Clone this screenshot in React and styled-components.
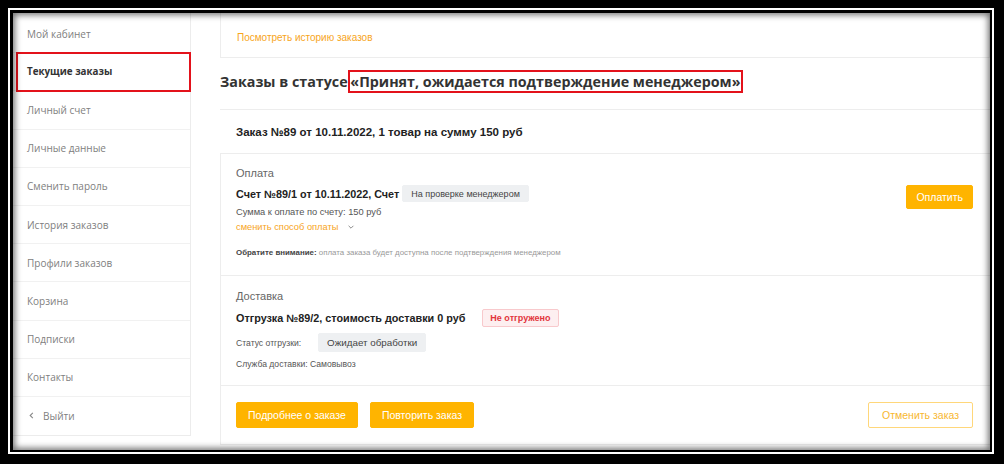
import React from "react";
import styled, { createGlobalStyle } from "styled-components";

const GlobalStyle = createGlobalStyle`
  html, body {
    margin: 0;
    padding: 0;
    background: #000;
  }
  * {
    box-sizing: border-box;
  }
`;

const Frame = styled.div`
  width: 1004px;
  height: 464px;
  background: #000;
  padding: 8px 10px 10px 8px;
`;

const FrameLine = styled.div`
  height: 100%;
  border: 2px solid #fff;
`;

const Screen = styled.div`
  height: 100%;
  border-style: solid;
  border-color: #000;
  border-width: 3px 2px 2px 3px;
  background: #000;
`;

const Page = styled.div`
  position: relative;
  display: flex;
  height: 100%;
  overflow: hidden;
  background: #fff;
  font-family: "Liberation Sans", Arial, sans-serif;
  color: #333;

  &::after {
    content: "";
    position: absolute;
    inset: 0;
    pointer-events: none;
    box-shadow: inset 0 0 6px 2px rgba(0, 0, 0, 0.55);
  }
`;

const Sidebar = styled.nav`
  width: 178px;
  flex-shrink: 0;
  align-self: flex-start;
  padding-top: 2px;
  border-right: 1px solid #ececec;
  border-bottom: 1px solid #ececec;
`;

const MenuItem = styled.div`
  position: relative;
  display: flex;
  align-items: center;
  gap: 7px;
  height: 38.2px;
  padding-left: 14px;
  border-bottom: ${(p) => (p.$last ? "none" : "1px solid #f1f1f1")};
  font-family: "Open Sans", sans-serif;
  font-size: ${(p) => (p.$active ? "9.8px" : "10px")};
  font-weight: ${(p) => (p.$active ? 700 : 400)};
  color: ${(p) => (p.$active ? "#333" : "#808080")};

  ${(p) =>
    p.$active &&
    `
    &::after {
      content: "";
      position: absolute;
      left: 3px;
      right: -1px;
      top: -1px;
      bottom: -2px;
      border: 2px solid #e3121b;
    }
  `}
`;

const Main = styled.main`
  flex: 1;
  margin-left: 29px;
  display: flex;
  flex-direction: column;
`;

const HistoryCard = styled.div`
  height: 45px;
  border: 1px solid #ededed;
  border-top: none;
  padding: 0 16px 12px;
  display: flex;
  align-items: flex-end;
`;

const OrangeLink = styled.span`
  color: #f7a51c;
  font-size: ${(p) => p.$size || "10px"};
  line-height: 14px;
`;

const Heading = styled.h2`
  margin: 12px 0 15px;
  font-family: "Open Sans", sans-serif;
  font-size: 14.3px;
  font-weight: 700;
  line-height: 24px;
  color: #333;
  white-space: nowrap;
`;

const Marked = styled.span`
  border: 2px solid #e3121b;
  margin-left: -3px;
  padding: 0 1px 0 0;
`;

const OrderHeader = styled.div`
  height: 44px;
  border-top: 1px solid #ededed;
  padding-left: 16px;
  display: flex;
  align-items: center;
  font-size: 11.5px;
  font-weight: 700;
  color: #222;
`;

const OrderBody = styled.div`
  border: 1px solid #ededed;
  border-right: none;
`;

const Section = styled.section`
  display: flex;
  justify-content: space-between;
  align-items: flex-start;
  padding: ${(p) => p.$pad};
  border-bottom: 1px solid #ededed;
`;

const Column = styled.div`
  display: flex;
  flex-direction: column;
`;

const Label = styled.div`
  font-size: 11px;
  line-height: 14px;
  color: #666;
`;

const Row = styled.div`
  display: flex;
  align-items: center;
  gap: ${(p) => p.$gap || "3px"};
  margin-top: ${(p) => p.$mt || "0"};
`;

const Title = styled.span`
  font-size: 10.8px;
  font-weight: 700;
  color: #222;
`;

const Text = styled.div`
  font-size: ${(p) => p.$size || "8.6px"};
  line-height: ${(p) => p.$lh || "14px"};
  color: ${(p) => p.$color || "#555"};
  margin-top: ${(p) => p.$mt || "0"};
  white-space: nowrap;

  b {
    color: #444;
  }
`;

const Badge = styled.span`
  display: inline-flex;
  align-items: center;
  height: ${(p) => p.$h || "17px"};
  padding: 0 ${(p) => p.$px || "8px"};
  border-radius: 2px;
  font-size: ${(p) => p.$size || "9px"};
  background: ${(p) => (p.$danger ? "#fdeff0" : "#eef0f2")};
  border: 1px solid ${(p) => (p.$danger ? "#f8c9cc" : "#eef0f2")};
  color: ${(p) => (p.$danger ? "#e2353c" : "#444")};
  font-weight: ${(p) => (p.$danger ? 700 : 400)};
`;

const Button = styled.button`
  height: ${(p) => p.$h || "26px"};
  padding: 0 ${(p) => p.$px || "11px"};
  border-radius: 2px;
  font-family: "Liberation Sans", Arial, sans-serif;
  font-size: 10.5px;
  cursor: pointer;
  background: ${(p) => (p.$outline ? "#fff" : "#ffb400")};
  border: 1px solid ${(p) => (p.$outline ? "#ffd77a" : "#ffb400")};
  color: ${(p) => (p.$outline ? "#f7b731" : "#fff")};
  margin-top: ${(p) => p.$mt || "0"};
`;

const Footer = styled.div`
  display: flex;
  justify-content: space-between;
  padding: 16px 17px 16px 15px;
`;

const ButtonGroup = styled.div`
  display: flex;
  gap: 12px;
`;

const Chevron = ({ dir = "down", size = 8 }) => (
  <svg width={size} height={size} viewBox="0 0 10 10" fill="none" stroke="#888" strokeWidth="1.2">
    {dir === "down" ? <path d="M2 3.5 L5 6.5 L8 3.5" /> : <path d="M6.5 2 L3.5 5 L6.5 8" />}
  </svg>
);

const menu = [
  "Мой кабинет",
  "Текущие заказы",
  "Личный счет",
  "Личные данные",
  "Сменить пароль",
  "История заказов",
  "Профили заказов",
  "Корзина",
  "Подписки",
  "Контакты",
];

const App = () => {
  return (
    <>
      <GlobalStyle />
      <Frame>
        <FrameLine>
          <Screen>
            <Page>
              <Sidebar>
                {menu.map((item) => (
                  <MenuItem key={item} $active={item === "Текущие заказы"}>
                    {item}
                  </MenuItem>
                ))}
                <MenuItem $last>
                  <Chevron dir="left" size={9} />
                  Выйти
                </MenuItem>
              </Sidebar>

              <Main>
                <HistoryCard>
                  <OrangeLink>Посмотреть историю заказов</OrangeLink>
                </HistoryCard>

                <Heading>
                  Заказы в статусе <Marked>«Принят, ожидается подтверждение менеджером»</Marked>
                </Heading>

                <OrderHeader>Заказ №89 от 10.11.2022, 1 товар на сумму 150 руб</OrderHeader>

                <OrderBody>
                  <Section $pad="12px 17px 16px 15px">
                    <Column>
                      <Label>Оплата</Label>
                      <Row $mt="5px">
                        <Title>Счет №89/1 от 10.11.2022, Счет</Title>
                        <Badge>На проверке менеджером</Badge>
                      </Row>
                      <Text $size="9.3px" $mt="3px">Сумма к оплате по счету: 150 руб</Text>
                      <Row $gap="9px" $mt="1px">
                        <OrangeLink $size="9.3px">сменить способ оплаты</OrangeLink>
                        <Chevron />
                      </Row>
                      <Text $size="7.9px" $lh="12px" $mt="13px" $color="#999">
                        <b>Обратите внимание:</b> оплата заказа будет доступна после подтверждения менеджером
                      </Text>
                    </Column>
                    <Button $h="24px" $px="9px" $mt="19px">Оплатить</Button>
                  </Section>

                  <Section $pad="13px 17px 14px 15px">
                    <Column>
                      <Label>Доставка</Label>
                      <Row $gap="17px" $mt="6px">
                        <Title>Отгрузка №89/2, стоимость доставки 0 руб</Title>
                        <Badge $danger $h="18px" $px="7px">Не отгружено</Badge>
                      </Row>
                      <Row $gap="17px" $mt="6px">
                        <Text>Статус отгрузки:</Text>
                        <Badge $h="19px" $size="9.8px">Ожидает обработки</Badge>
                      </Row>
                      <Text $mt="5px">Служба доставки: Самовывоз</Text>
                    </Column>
                  </Section>

                  <Footer>
                    <ButtonGroup>
                      <Button>Подробнее о заказе</Button>
                      <Button>Повторить заказ</Button>
                    </ButtonGroup>
                    <Button $outline $px="13px">Отменить заказ</Button>
                  </Footer>
                </OrderBody>
              </Main>
            </Page>
          </Screen>
        </FrameLine>
      </Frame>
    </>
  );
};

export default App;
